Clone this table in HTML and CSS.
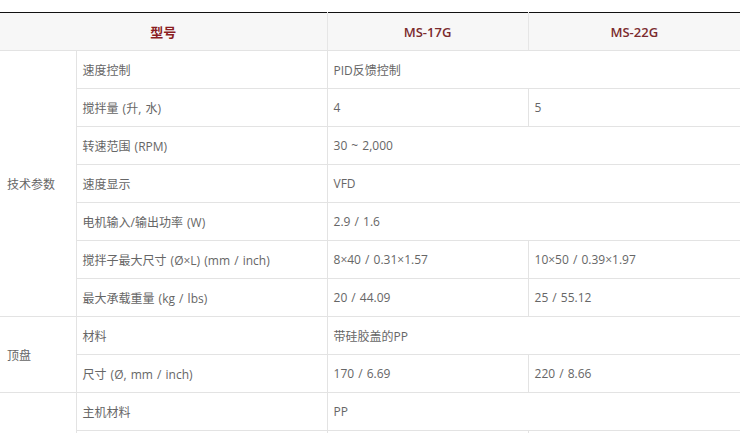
FILE: index.html
```html
<!DOCTYPE html>
<html lang="zh-CN">
<head>
<meta charset="utf-8">
<title>规格参数</title>
<link rel="stylesheet" href="styles.css">
</head>
<body>
<table class="spec">
  <colgroup>
    <col class="c1"><col class="c2"><col class="c3"><col class="c4">
  </colgroup>
  <thead>
    <tr>
      <th colspan="2" class="h-model">型号</th>
      <th>MS-17G</th>
      <th>MS-22G</th>
    </tr>
  </thead>
  <tbody>
    <tr>
      <td rowspan="7" class="group">技术参数</td>
      <td>速度控制</td>
      <td colspan="2">PID反馈控制</td>
    </tr>
    <tr><td>搅拌量 (升, 水)</td><td>4</td><td>5</td></tr>
    <tr><td>转速范围 (RPM)</td><td colspan="2">30 ~ 2,000</td></tr>
    <tr><td>速度显示</td><td colspan="2">VFD</td></tr>
    <tr><td>电机输入/输出功率 (W)</td><td colspan="2">2.9 / 1.6</td></tr>
    <tr><td>搅拌子最大尺寸 (Ø×L) (mm / inch)</td><td>8×40 / 0.31×1.57</td><td>10×50 / 0.39×1.97</td></tr>
    <tr><td>最大承载重量 (kg / lbs)</td><td>20 / 44.09</td><td>25 / 55.12</td></tr>
    <tr>
      <td rowspan="2" class="group">顶盘</td>
      <td>材料</td>
      <td colspan="2">带硅胶盖的PP</td>
    </tr>
    <tr><td>尺寸 (Ø, mm / inch)</td><td>170 / 6.69</td><td>220 / 8.66</td></tr>
    <tr>
      <td rowspan="3" class="group">主机</td>
      <td>主机材料</td>
      <td colspan="2">PP</td>
    </tr>
    <tr><td>尺寸 (W×D×H, mm)</td><td>200×280×100</td><td>250×330×100</td></tr>
    <tr><td>重量 (kg)</td><td>2.2</td><td>2.7</td></tr>
  </tbody>
</table>
</body>
</html>
```
FILE: styles.css
```css
html, body {
  margin: 0;
  padding: 0;
  background: #fff;
}
body {
  padding-top: 12px;
  font-family: "Open Sans", "Noto Sans CJK SC", sans-serif;
  font-size: 12px;
  color: #666;
}
.spec {
  width: 740px;
  border-collapse: collapse;
  table-layout: fixed;
  border-top: 1px solid #111;
}
.c1 { width: 76px; }
.c2 { width: 251px; }
.c3 { width: 201px; }
.c4 { width: 212px; }
.spec th {
  height: 37px;
  padding: 0;
  background: #f7f7f7;
  color: #7b2b2e;
  font-family: "Open Sans", "Noto Sans CJK SC", sans-serif;
  font-weight: 600;
  font-size: 13px;
  text-align: center;
  vertical-align: middle;
  border-left: 1px solid #e6e6e6;
  border-bottom: 1px solid #e3e3e3;
}
.spec th:first-child { border-left: 0; }
.spec th.h-model { font-weight: 700; color: #8a1d22; }
.spec td {
  height: 37px;
  padding: 0 0 0 6px;
  text-align: left;
  vertical-align: middle;
  border: 1px solid #e3e3e3;
  white-space: nowrap;
  overflow: hidden;
  word-spacing: 1px;
}
.spec td.group {
  border-left: 0;
  padding-left: 7px;
}
.spec td:last-child { border-right: 0; }
```
